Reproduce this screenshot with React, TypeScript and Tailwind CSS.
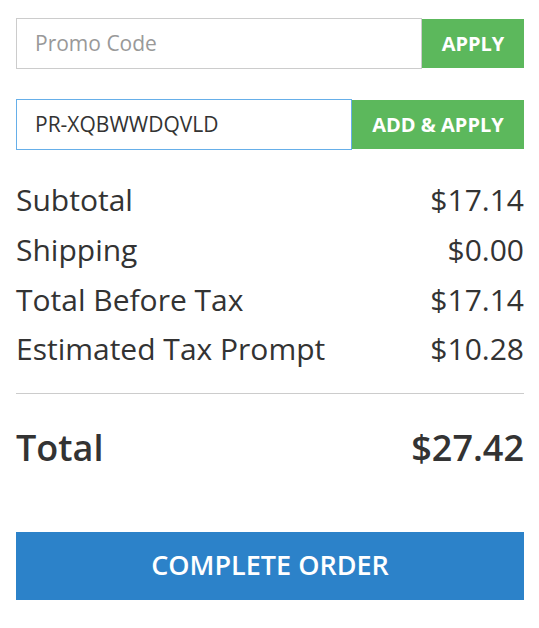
import React from "react";

export default function App() {
  const rows = [
    ["Subtotal", "$17.14"],
    ["Shipping", "$0.00"],
    ["Total Before Tax", "$17.14"],
    ["Estimated Tax Prompt", "$10.28"],
  ];
  return (
    <div
      className="w-[539px] h-[628px] bg-white pl-4 pr-[15px] pt-[18px] text-[#333]"
      style={{ fontFamily: '"Open Sans", sans-serif' }}
    >
      <div className="flex h-[51px]">
        <input
          className="flex-1 min-w-0 border border-[#ccc] px-[18px] text-[21px] outline-none placeholder:text-[#999]"
          placeholder="Promo Code"
        />
        <button className="w-[102px] my-px bg-[#5cb85c] text-white text-[20px] font-bold">
          APPLY
        </button>
      </div>
      <div className="flex h-[51px] mt-[30px]">
        <input
          className="flex-1 min-w-0 border border-[#66afe9] px-[18px] text-[21px] text-[#333] outline-none"
          defaultValue="PR-XQBWWDQVLD"
        />
        <button className="w-[172px] my-px bg-[#5cb85c] text-white text-[20px] font-bold">
          ADD &amp; APPLY
        </button>
      </div>
      <div className="mt-[25px] flex flex-col">
        {rows.map(([l, v]) => (
          <div key={l} className="flex justify-between h-[49.67px] items-center text-[30px]">
            <span>{l}</span>
            <span>{v}</span>
          </div>
        ))}
      </div>
      <div className="mt-[19px] border-t border-[#ccc]" />
      <div className="flex justify-between items-center h-[108px] text-[36px] font-semibold">
        <span>Total</span>
        <span>$27.42</span>
      </div>
      <button className="mt-[30px] w-full h-[68px] bg-[#2c82c9] text-white text-[27px] font-semibold">
        COMPLETE ORDER
      </button>
    </div>
  );
}
